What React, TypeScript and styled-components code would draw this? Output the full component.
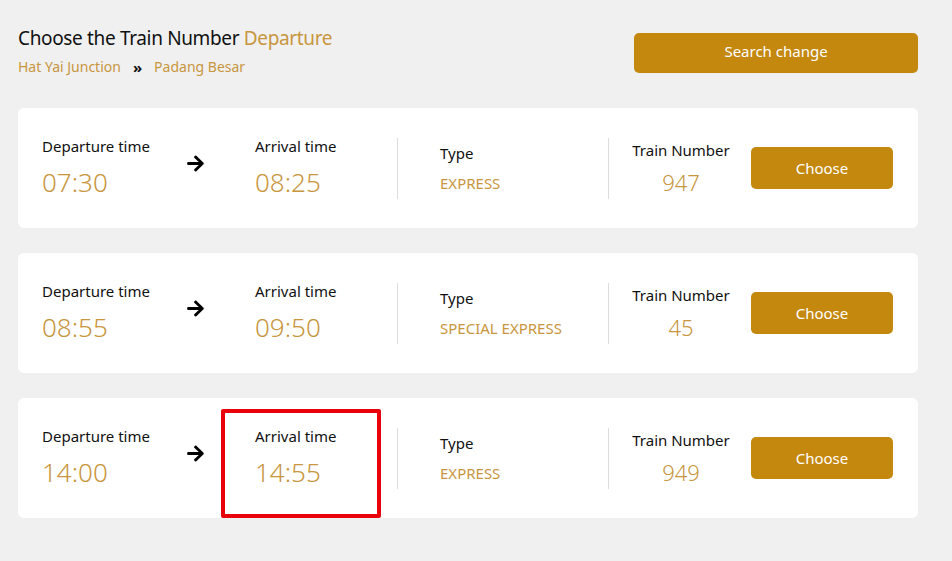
import React from "react";
import styled, { createGlobalStyle } from "styled-components";
import { FaArrowRight } from "react-icons/fa";

const GOLD = "#c8963e";
const BTN = "#c4880f";

const Global = createGlobalStyle`
  html, body { margin: 0; padding: 0; background: #f0f0f0; }
  body { font-family: "Noto Sans", "Open Sans", sans-serif; color: #111; }
`;

const Page = styled.div`
  padding: 26px 34px 40px 18px;
  display: flex;
  flex-direction: column;
`;

const Header = styled.div`
  display: flex;
  justify-content: space-between;
  align-items: flex-start;
  height: 82px;
`;

const TitleBlock = styled.div`
  display: flex;
  flex-direction: column;
  gap: 8px;
`;

const Title = styled.h1`
  margin: 0;
  font-size: 19px;
  line-height: 24px;
  font-weight: 400;
  letter-spacing: -0.35px;
  color: #111;
`;

const Gold = styled.span`
  color: ${GOLD};
`;

const Route = styled.div`
  font-size: 14px;
  line-height: 18px;
  color: ${GOLD};
  display: flex;
  align-items: center;
  gap: 12px;
`;

const Chevrons = styled.span`
  color: #111;
  font-weight: 700;
  font-size: 15px;
`;

const PrimaryButton = styled.button<{ $w: number; $h: number; $pb: number }>`
  width: ${(p) => p.$w}px;
  height: ${(p) => p.$h}px;
  background: ${BTN};
  color: #fff;
  border: none;
  border-radius: 5px;
  font-family: inherit;
  font-size: 15px;
  line-height: 20px;
  padding: 0 0 ${(p) => p.$pb}px;
  cursor: pointer;
  flex-shrink: 0;
`;

const SearchButton = styled(PrimaryButton)`
  margin-top: 7px;
`;

const List = styled.div`
  display: flex;
  flex-direction: column;
  gap: 25px;
`;

const Card = styled.div`
  position: relative;
  height: 120px;
  background: #fff;
  border-radius: 6px;
  display: flex;
  align-items: center;
  padding: 0 25px 0 24px;
  box-sizing: border-box;
`;

const TimeCol = styled.div<{ $w: number }>`
  width: ${(p) => p.$w}px;
  display: flex;
  flex-direction: column;
  gap: 10px;
  margin-top: -2px;
`;

const Label = styled.div`
  font-size: 15px;
  line-height: 20px;
  color: #111;
  white-space: nowrap;
`;

const TimeValue = styled.div`
  font-size: 26px;
  line-height: 32px;
  font-weight: 300;
  color: ${GOLD};
`;

const ArrowCol = styled.div`
  width: 67px;
  display: flex;
  margin-top: -10px;
  margin-left: -2px;
  margin-right: 2px;
  font-size: 19px;
  color: #000;
`;

const Divider = styled.div`
  width: 1px;
  height: 61px;
  background: #ddd;
`;

const TypeCol = styled.div`
  width: 210px;
  padding-left: 42px;
  box-sizing: border-box;
  display: flex;
  flex-direction: column;
  gap: 10px;
`;

const TypeValue = styled.div`
  font-size: 15px;
  line-height: 20px;
  color: ${GOLD};
  text-transform: uppercase;
  white-space: nowrap;
`;

const NumberCol = styled.div`
  margin-left: 22px;
  width: 100px;
  display: flex;
  flex-direction: column;
  align-items: center;
  gap: 8px;
`;

const NumberValue = styled.div`
  font-size: 22px;
  line-height: 28px;
  font-weight: 300;
  color: ${GOLD};
`;

const ChooseButton = styled(PrimaryButton)`
  margin-left: 20px;
`;

const Highlight = styled.div`
  position: absolute;
  left: 203px;
  top: 11px;
  width: 160px;
  height: 109px;
  border: 4px solid #e8000b;
  border-radius: 2px;
  box-sizing: border-box;
  pointer-events: none;
`;

type Train = {
  dep: string;
  arr: string;
  type: string;
  num: string;
  highlight?: boolean;
};

const trains: Train[] = [
  { dep: "07:30", arr: "08:25", type: "Express", num: "947" },
  { dep: "08:55", arr: "09:50", type: "Special Express", num: "45" },
  { dep: "14:00", arr: "14:55", type: "Express", num: "949", highlight: true },
];

export default function App() {
  return (
    <>
      <Global />
      <Page>
        <Header>
          <TitleBlock>
            <Title>
              Choose the Train Number <Gold>Departure</Gold>
            </Title>
            <Route>
              <span>Hat Yai Junction</span>
              <Chevrons>»</Chevrons>
              <span>Padang Besar</span>
            </Route>
          </TitleBlock>
          <SearchButton $w={284} $h={40} $pb={4}>Search change</SearchButton>
        </Header>
        <List>
          {trains.map((t) => (
            <Card key={t.num}>
              <TimeCol $w={146}>
                <Label>Departure time</Label>
                <TimeValue>{t.dep}</TimeValue>
              </TimeCol>
              <ArrowCol>
                <FaArrowRight />
              </ArrowCol>
              <TimeCol $w={142}>
                <Label>Arrival time</Label>
                <TimeValue>{t.arr}</TimeValue>
              </TimeCol>
              <Divider />
              <TypeCol>
                <Label>Type</Label>
                <TypeValue>{t.type}</TypeValue>
              </TypeCol>
              <Divider />
              <NumberCol>
                <Label>Train Number</Label>
                <NumberValue>{t.num}</NumberValue>
              </NumberCol>
              <ChooseButton $w={142} $h={42} $pb={0}>Choose</ChooseButton>
              {t.highlight && <Highlight />}
            </Card>
          ))}
        </List>
      </Page>
    </>
  );
}
